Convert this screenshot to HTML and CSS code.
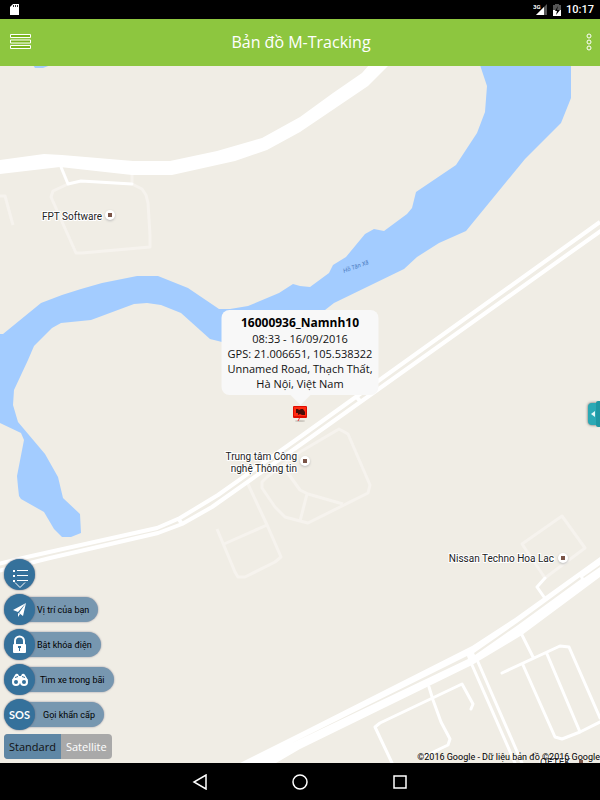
FILE: index.html
```
<!DOCTYPE html>
<html lang="vi">
<head>
<meta charset="utf-8">
<meta name="viewport" content="width=device-width, initial-scale=1">
<title>Bản đồ M-Tracking</title>
<link rel="stylesheet" href="styles.css">
</head>
<body>

<div class="status-bar">
  <svg class="sd-icon" width="10" height="12" viewBox="0 0 10 12"><path fill="#fff" d="M3 0h6v11H0V3z"/><path stroke="#333" d="M3.500 1v2M5.500 1v2M7.500 1v2"/></svg>
  <div class="status-right">
    <svg width="15" height="13" viewBox="0 0 15 13">
      <path fill="#555" d="M14 1v11H3z"/><path fill="#fff" d="M11 4v8H3z"/>
      <text class="net" x="0" y="6">3G</text>
    </svg>
    <svg width="8" height="12" viewBox="0 0 8 12">
      <path fill="#555" d="M2 0h4v1h2v5H0V1h2z"/><path fill="#fff" d="M0 6h8v6H0z"/><path fill="#000" d="M5 2L2 7h2l-1 4 4-5H4z"/>
    </svg>
    <span class="clock">10:17</span>
  </div>
</div>

<header class="app-bar">
  <button class="bar-btn" aria-label="Menu">
    <svg width="22" height="16" viewBox="0 0 22 16"><path fill="#7ab51d" stroke="#fff" d="M.5.500h20v3H.5zM.5 6h20v3H.5zM.5 11.500h20v3H.5z"/></svg>
  </button>
  <h1>Bản đồ M-Tracking</h1>
  <button class="bar-btn bar-btn-right" aria-label="More">
    <svg width="6" height="20" viewBox="0 0 6 20"><g fill="none" stroke="#fff"><circle cx="3" cy="4" r="2"/><circle cx="3" cy="10" r="2"/><circle cx="3" cy="16" r="2"/></g></svg>
  </button>
</header>

<main class="map">
  <svg class="map-canvas" viewBox="0 66 600 697" preserveAspectRatio="xMidYMid slice">
    <!-- water -->
    <g class="water">
      <path d="M480 65 487 86 485 112 477 133 456 165 416 192 412 208 407 214 384 231 374 229 365 234 346 257 333 265 329 273 310 287 300 286 293 284 279 293 248 306 230 309 219 309 188 288 158 276 137 276 102 283 81 289 62 295 41 303 3 334H0V423L21 433 24 440 17 476 18 487 19 496 21 499 44 512 54 529 62 537H71L81 533 80 514 63 498 58 477 45 454 18 422 13 405 14 390 28 360 34 346 52 328 61 323 91 320 134 304 147 303 161 305 181 313 210 339 222 342 250 342 325 310 334 303 404 269 417 257 439 243 466 231 525 159 561 123 571 98V65z"/>
      <path d="M33 65H51L43 68H35z"/>
    </g>
    <!-- service roads -->
    <g class="road-faint">
      <path d="M132 174V184M68 184 53 191 51 197 76 253H82L150 247V235L148 203 146 195 142 189 132 184M0 196H5L13 225"/>
      <path d="M545 578 522 544 562 516 585 548z"/>
      <path d="M300 452 339 429 348 434 370 485 368 493 308 523 300 521 285 517 275 507 262 488V482L267 477z"/>
      <path d="M282 465 300 490 308 494 343 504M307 494 300 521M247 482 268 527 281 557 275 562 245 577H238L235 572 217 529M224 544 267 525"/>
    </g>
    <!-- local roads -->
    <g class="road-local">
      <path d="M61 167 68 184 81 181 132 184"/>
      <path d="M545 578 537 587 544 597M522 635 533 657M502 673 560 646 569 647 600 718M523 665 555 737 562 739 580 732 602 721M547 654 580 732"/>
      <path d="M472 665 515 763M478 662 522 763M429 687 433 700 441 722 450 739 448 745 425 756M392 763 375 727 380 723 462 684 473 704 471 709"/>
    </g>
    <!-- dual carriageway -->
    <g class="road-dual">
      <path d="M600 222 300 437 218 495 180 518 157 528 27 557-2 564M602 230 300 445 212 507 182 524 158 533 50 558-2 571M178 518 182 524M355 395 360 401"/>
    </g>
    <!-- main roads -->
    <path class="road-main" d="M0 160 44 154 62 155 133 161H170L217 151 262 138 300 117 333 93 362 73 369 65H389L368 86 300 132 267 150 235 161 172 175H132L60 167 0 174z"/>
    <path class="road-main" d="M600 557 515 618 472 646 300 733 240 763H276L300 749 472 665 522 635 600 577z"/>
    <path class="median" d="M600 567 584 578 583 577 600 565zM581 579 518 625 475 655 474 653 517 623 580 577zM467 656 468 659 290 744z"/>

    <g class="place">
      <g class="poi"><circle cx="110" cy="215" r="5"/><circle cx="305" cy="461" r="5"/><circle cx="563" cy="558" r="5"/></g>
      <path class="poi-dot" d="M108 213h4v4h-4zM303 459h4v4h-4zM561 556h4v4h-4zM579 760h4v4h-4z"/>
      <text x="102" y="220" text-anchor="end">FPT Software</text>
      <text x="297" y="460" text-anchor="end">Trung tâm Công</text>
      <text x="297" y="472" text-anchor="end">nghệ Thông tin</text>
      <text x="554" y="562" text-anchor="end">Nissan Techno Hoa Lac</text>
      <text x="540" y="766">OETEK</text>
    </g>
    <text class="lake" transform="translate(344 273) rotate(-20)">Hồ Tân Xã</text>

    <!-- vehicle marker -->
    <ellipse cx="300" cy="421" rx="5" ry="1" fill="#ccc8c0"/>
    <path d="M300 417 298 421" stroke="#e33" stroke-width="1"/>
    <rect x="293" y="406" width="14" height="12" rx="1" fill="#e00c00"/>
    <rect x="294" y="407" width="12" height="9" fill="#ff2a10"/>
    <path fill="#4a0d08" d="M296 409h2l1 1 2-1h2l2 3v3h-3l-2-1-2 1v-2h-2z"/>
  </svg>

  <section class="callout">
    <h2>16000936_Namnh10</h2>
    <p>08:33 - 16/09/2016</p>
    <p>GPS: 21.006651, 105.538322</p>
    <p>Unnamed Road, Thạch Thất,</p>
    <p>Hà Nội, Việt Nam</p>
  </section>

  <button class="drawer-handle" aria-label="Mở bảng">
    <svg width="5" height="6" viewBox="0 0 5 6"><path fill="#e6f7f8" d="M4 0v6L0 3z"/></svg>
  </button>

  <div class="controls">
    <button class="action" aria-label="Danh sách">
      <span class="action-icon"><svg width="30" height="30" viewBox="0 0 30 30"><path fill="none" stroke="#fff" d="M12 10.500h11M12 15.500h11M12 20.500h11M10 22.500l5 5 5-5"/><path fill="#fff" d="M8 10h2v2H8zM8 15h2v2H8zM8 20h2v2H8z"/></svg></span>
    </button>
    <button class="action">
      <span class="action-icon"><svg width="30" height="30" viewBox="0 0 30 30"><path fill="#fff" d="M21 8 8 15l5 2zM21 8l-7 10 4 3zM13 18v4l2-3z"/></svg></span>
      <span class="action-label">Vị trí của bạn</span>
    </button>
    <button class="action">
      <span class="action-icon"><svg width="30" height="30" viewBox="0 0 30 30"><path fill="none" stroke="#fff" stroke-width="2" d="M10 15v-4a4 4 0 0 1 9 0v4"/><rect x="8" y="14" width="13" height="9" rx="1" fill="#fff"/><path fill="#35719b" d="M14 16h2v2h-1v3h-1v-3h-1v-2z"/></svg></span>
      <span class="action-label">Bật khóa điện</span>
    </button>
    <button class="action">
      <span class="action-icon"><svg width="30" height="30" viewBox="0 0 30 30"><path fill="#fff" d="M10 10q1-2 3-1l1 2h2l1-2q2-1 3 1l3 5-3 3H10l-3-3z"/><circle cx="11" cy="17" r="4" fill="#fff"/><circle cx="19" cy="17" r="4" fill="#fff"/><circle cx="11" cy="17" r="2" fill="#35719b"/><circle cx="19" cy="17" r="2" fill="#35719b"/><path stroke="#35719b" d="M10 12.500l3-1M17 11.500l3 1"/></svg></span>
      <span class="action-label action-label-far">Tìm xe trong bãi</span>
    </button>
    <button class="action">
      <span class="action-icon sos">SOS</span>
      <span class="action-label action-label-farther">Gọi khẩn cấp</span>
    </button>
    <div class="map-type">
      <button class="active" aria-pressed="true">Standard</button>
      <button aria-pressed="false">Satellite</button>
    </div>
  </div>

  <p class="attribution">©2016 Google - Dữ liệu bản đồ ©2016 Google</p>
</main>

<nav class="nav-bar">
  <button aria-label="Back"><svg width="16" height="16" viewBox="0 0 16 16"><path d="M14 1v14L2 8z"/></svg></button>
  <button aria-label="Home"><svg width="16" height="16" viewBox="0 0 16 16"><circle cx="8" cy="8" r="7"/></svg></button>
  <button aria-label="Recent"><svg width="16" height="16" viewBox="0 0 16 16"><path d="M2 2h12v12H2z"/></svg></button>
</nav>

</body>
</html>
```
FILE: styles.css
```
* { box-sizing: border-box; }

body {
  margin: 0;
  height: 100vh;
  display: flex;
  flex-direction: column;
  background: #000;
  font-family: Roboto, sans-serif;
  color: #111;
}

h1, h2, p { margin: 0; font-weight: normal; }

button {
  margin: 0;
  padding: 0;
  border: 0;
  background: none;
  font: inherit;
  color: inherit;
  cursor: pointer;
}

svg { display: block; }

/* status bar */
.status-bar {
  height: 19px;
  padding: 0 6px 0 10px;
  display: flex;
  align-items: center;
  justify-content: space-between;
  color: #fff;
}
.status-right { display: flex; align-items: center; gap: 5px; }
.net { font-size: 6px; font-weight: bold; fill: #fff; }
.clock { font-size: 11px; font-weight: 500; }

/* title bar */
.app-bar {
  height: 47px;
  padding: 0 8px 2px 10px;
  display: grid;
  grid-template-columns: 40px 1fr 40px;
  align-items: center;
  background: #8dc63f;
  color: #fff;
}
.app-bar h1 {
  font: 16px "Open Sans", sans-serif;
  text-align: center;
}
.bar-btn-right { justify-self: end; }

/* map */
.map {
  position: relative;
  flex: 1;
  min-height: 0;
  overflow: hidden;
  display: flex;
  align-items: flex-end;
  justify-content: space-between;
  background: #f0ede5;
}
.map-canvas {
  position: absolute;
  top: 0;
  left: 0;
  width: 100%;
  height: 100%;
}
.water { fill: #a3ccff; }
.road-main { fill: #fff; }
.median { fill: #f0ede5; }
.road-faint, .road-local, .road-dual { fill: none; stroke: #fff; stroke-linejoin: round; }
.road-faint { stroke: #f6f3ee; stroke-width: 3; }
.road-local { stroke-width: 3; stroke-linecap: round; }
.road-dual { stroke-width: 4; }
.place text {
  font-size: 10px;
  fill: #222;
  stroke: #fff;
  stroke-width: 2px;
  paint-order: stroke;
}
.poi { fill: #fff; filter: drop-shadow(0 1px 1px #bbb); }
.poi-dot { fill: #7b5548; }
.lake { font-size: 6px; font-style: italic; fill: #4a7ac0; }

.callout {
  position: absolute;
  left: 50%;
  bottom: calc(50% + 20px);
  transform: translateX(-50%);
  padding: 5px 6px 4px;
  border-radius: 8px;
  background: #f8f8f8;
  font: 11px/15px "Open Sans", sans-serif;
  text-align: center;
  white-space: nowrap;
}
.callout::after {
  content: "";
  position: absolute;
  top: 100%;
  left: 50%;
  margin-left: -10px;
  border: 10px solid transparent;
  border-top-color: #f8f8f8;
  border-bottom: 0;
}
.callout h2 { font-size: 12px; line-height: 16px; font-weight: bold; color: #000; }

.drawer-handle {
  position: absolute;
  right: 0;
  top: 50%;
  width: 12px;
  height: 22px;
  margin-top: -12px;
  padding-left: 3px;
  border-radius: 4px 0 0 4px;
  background: #2ba9b5;
  box-shadow: 0 0 3px #555;
}
.drawer-handle::after {
  content: "";
  position: absolute;
  top: -2px;
  bottom: -2px;
  right: 0;
  width: 4px;
  border-radius: 2px 0 0 2px;
  background: #1f97a3;
}

/* floating actions */
.controls {
  position: relative;
  padding: 0 0 4px 4px;
  display: flex;
  flex-direction: column;
  align-items: flex-start;
  gap: 4px;
}
.action { display: flex; align-items: center; height: 31px; }
.action-icon {
  position: relative;
  z-index: 1;
  width: 31px;
  height: 31px;
  display: flex;
  align-items: center;
  justify-content: center;
  border-radius: 50%;
  background: #35719b;
  box-shadow: 0 0 2px #667;
}
.action-label {
  height: 25px;
  margin-left: -15px;
  padding: 0 9px 0 17px;
  border-radius: 0 13px 13px 0;
  background: #7797b0;
  box-shadow: 0 0 2px #889;
  font-size: 9px;
  line-height: 27px;
  color: #000;
}
.action-label-far { padding-left: 20px; }
.action-label-farther { padding-left: 23px; }
.sos { font: bold 11px Lato, sans-serif; color: #fff; }

.map-type {
  display: flex;
  border-radius: 4px;
  overflow: hidden;
  background: #a9a9a9;
  font: 11px/25px "Open Sans", sans-serif;
  color: #fff;
}
.map-type button { padding: 0 5px; }
.map-type .active { background: #5f87a5; color: #111; }

.attribution {
  position: relative;
  font-size: 9px;
  line-height: 12px;
  color: #000;
}

/* system navigation */
.nav-bar {
  height: 37px;
  display: flex;
  align-items: center;
  justify-content: center;
  gap: 84px;
}
.nav-bar svg { fill: none; stroke: #fff; stroke-width: 1.5; }
```
